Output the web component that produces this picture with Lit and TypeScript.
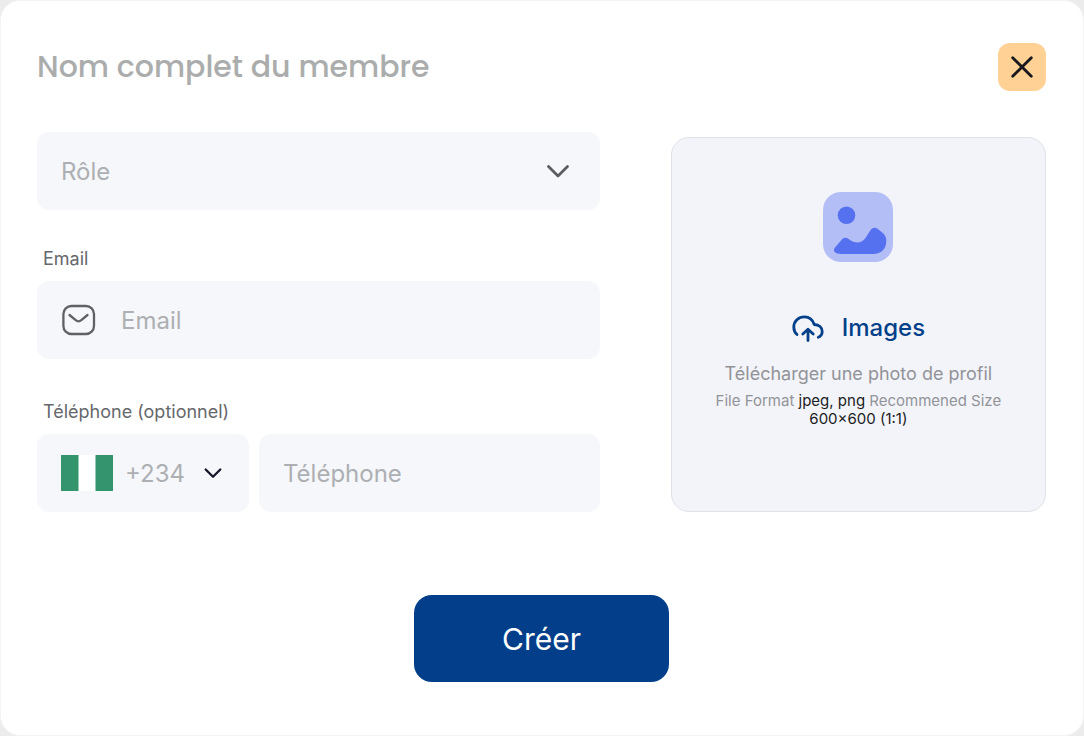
import { LitElement, html, css } from "lit";
import { customElement } from "lit/decorators.js";

@customElement("app-root")
export class AppRoot extends LitElement {
  static styles = css`
    :host {
      display: block;
      min-height: 100vh;
      background: #ececec;
      font-family: Inter, "Liberation Sans", sans-serif;
      color: #1c1c22;
    }
    *,
    *::before,
    *::after {
      box-sizing: border-box;
    }
    input,
    select,
    button {
      font: inherit;
      border: 0;
      margin: 0;
      padding: 0;
      background: none;
      border-radius: 0;
      min-width: 0;
    }
    input::placeholder {
      color: #adafb2;
      opacity: 1;
    }
    svg {
      display: block;
      flex: none;
    }
    .card {
      min-height: 100vh;
      padding: 42px 37px 42px 36px;
      background: #fff;
      border: 1px solid #f4f4f4;
      border-radius: 20px;
    }
    .header {
      display: flex;
      align-items: center;
      gap: 24px;
      margin-bottom: 41px;
    }
    .name {
      flex: 1;
      height: 48px;
      font-family: Poppins, Inter, sans-serif;
      font-size: 30px;
      font-weight: 500;
    }
    .name::placeholder {
      color: #abadad;
    }
    .close {
      display: grid;
      place-items: center;
      width: 48px;
      height: 48px;
      border-radius: 12px;
      background: #ffd195;
      cursor: pointer;
    }
    .body {
      display: grid;
      grid-template-columns: 3fr 2fr;
      gap: 71px;
      align-items: end;
    }
    .group {
      margin-top: 38px;
    }
    .group.wide {
      margin-top: 42px;
    }
    .label {
      display: block;
      padding-left: 6px;
      margin-bottom: 11px;
      font-size: 18px;
      line-height: 22px;
      color: #66686b;
    }
    .field {
      display: flex;
      align-items: center;
      height: 78px;
      padding: 0 24px;
      border-radius: 12px;
      background: #f5f7fb;
      font-size: 24px;
    }
    .field input {
      width: 100%;
      height: 100%;
    }
    .mail {
      gap: 24px;
    }
    .pick {
      display: grid;
      flex: 1;
      align-items: center;
      height: 100%;
    }
    .pick select,
    .pick svg {
      grid-area: 1 / 1;
    }
    .pick select {
      appearance: none;
      width: 100%;
      height: 100%;
      color: #adafb2;
      cursor: pointer;
    }
    .pick svg {
      justify-self: end;
      pointer-events: none;
    }
    .role {
      padding-right: 30px;
    }
    .phone {
      display: grid;
      grid-template-columns: 212px 1fr;
      gap: 10px;
    }
    .code {
      gap: 12px;
    }
    .upload {
      display: flex;
      flex-direction: column;
      align-items: center;
      aspect-ratio: 1;
      padding: 54px 24px 24px;
      border: 1px solid #e0e1e8;
      border-radius: 18px;
      background: #f2f4f9;
      text-align: center;
      cursor: pointer;
    }
    .file {
      position: absolute;
      width: 1px;
      height: 1px;
      opacity: 0;
    }
    .action {
      display: flex;
      align-items: center;
      gap: 18px;
      margin-top: 50px;
      font-size: 24px;
      line-height: 32px;
      font-weight: 500;
      color: #043f8a;
    }
    .caption {
      margin-top: 18px;
      font-size: 18px;
      line-height: 24px;
      color: #929398;
    }
    .hint {
      max-width: 300px;
      margin-top: 6px;
      font-size: 15px;
      line-height: 18px;
      color: #929398;
    }
    .hint b {
      font-weight: 400;
      color: #1c1c22;
    }
    .footer {
      display: flex;
      justify-content: center;
      margin-top: 83px;
    }
    .submit {
      width: 255px;
      height: 87px;
      border-radius: 18px;
      background: #033e8a;
      color: #fff;
      font-size: 30px;
      cursor: pointer;
    }
  `;

  render() {
    return html`
      <form class="card" @submit=${(e: Event) => e.preventDefault()}>
        <div class="header">
          <input class="name" type="text" aria-label="Nom complet du membre" placeholder="Nom complet du membre" />
          <button class="close" type="button" aria-label="Fermer">
            <svg width="24" height="24" viewBox="0 0 24 24" fill="none" stroke="#17171c" stroke-width="2.8" stroke-linecap="round">
              <path d="M2.7 2.7 21.3 21.3M21.3 2.7 2.7 21.3" />
            </svg>
          </button>
        </div>

        <div class="body">
          <div>
            <div class="field role">
              <div class="pick">
                <select aria-label="Rôle">
                  <option>Rôle</option>
                </select>
                <svg width="24" height="24" viewBox="0 0 24 24" fill="none" stroke="#5b5c60" stroke-width="2.8" stroke-linecap="round" stroke-linejoin="round">
                  <path d="m2.5 7.5 9.5 9.5 9.5-9.5" />
                </svg>
              </div>
            </div>

            <div class="group">
              <label class="label" for="email">Email</label>
              <div class="field mail">
                <svg width="36" height="36" viewBox="0 0 36 36" fill="none" stroke="#606165" stroke-width="2.3" stroke-linecap="round" stroke-linejoin="round">
                  <rect x="2.4" y="4" width="30.6" height="28" rx="8" />
                  <path d="m8.5 13 6.2 5.200c1.700 1.400 3.900 1.400 5.600 0L26.500 13" />
                </svg>
                <input id="email" type="email" placeholder="Email" />
              </div>
            </div>

            <div class="group wide">
              <label class="label" for="phone">Téléphone (optionnel)</label>
              <div class="phone">
                <div class="field code">
                  <svg width="52" height="36" viewBox="0 0 52 36">
                    <path fill="#fff" d="M0 0h52v36H0z" />
                    <path fill="#33946e" d="M0 0h17.5v36H0zM34.5 0H52v36H34.5z" />
                  </svg>
                  <div class="pick">
                    <select aria-label="Indicatif">
                      <option>+234</option>
                    </select>
                    <svg width="24" height="24" viewBox="0 0 24 24" fill="none" stroke="#15152a" stroke-width="2.3" stroke-linecap="round" stroke-linejoin="round">
                      <path d="m4.7 8.5 7.3 7.3 7.3-7.3" />
                    </svg>
                  </div>
                </div>
                <div class="field">
                  <input id="phone" type="tel" placeholder="Téléphone" />
                </div>
              </div>
            </div>
          </div>

          <label class="upload">
            <input class="file" type="file" accept="image/jpeg,image/png" />
            <svg width="70" height="70" viewBox="0 0 70 70">
              <rect width="70" height="70" rx="18" fill="#b4bef6" />
              <circle cx="23.5" cy="23.3" r="8.8" fill="#5671f0" />
              <path fill="#5671f0" d="M12 55.500 18.500 48C20.500 45.400 23 45.200 26 47.200C32 51.800 38.500 52 42.800 45.500L47.300 38.500C49.500 35.300 52 35 54.800 37L59.500 40.700C62.300 43 63.300 45.500 63.300 49C63.300 57 58 62 50.500 62H18C12 62 9.300 59 12 55.500Z" />
            </svg>
            <span class="action">
              <svg width="32" height="32" viewBox="0 0 32 32" fill="none" stroke="#043f8a" stroke-width="2.8" stroke-linecap="round" stroke-linejoin="round">
                <path d="M5 22.500C2.700 20.500 1.800 18 1.800 15C1.800 9 6.500 4.800 12.500 4.800C17.200 4.800 20.800 8 22.300 12.500C27 12.700 30.200 15.500 30.200 19.500C30.200 22.100 28.700 24.300 26.300 25.200" />
                <path d="M16 28.500V18M10.800 22 16 17.200l5.200 4.800" />
              </svg>
              Images
            </span>
            <span class="caption">Télécharger une photo de profil</span>
            <span class="hint">File Format <b>jpeg, png</b> Recommened Size <b>600×600 (1:1)</b></span>
          </label>
        </div>

        <div class="footer">
          <button class="submit" type="submit">Créer</button>
        </div>
      </form>
    `;
  }
}
